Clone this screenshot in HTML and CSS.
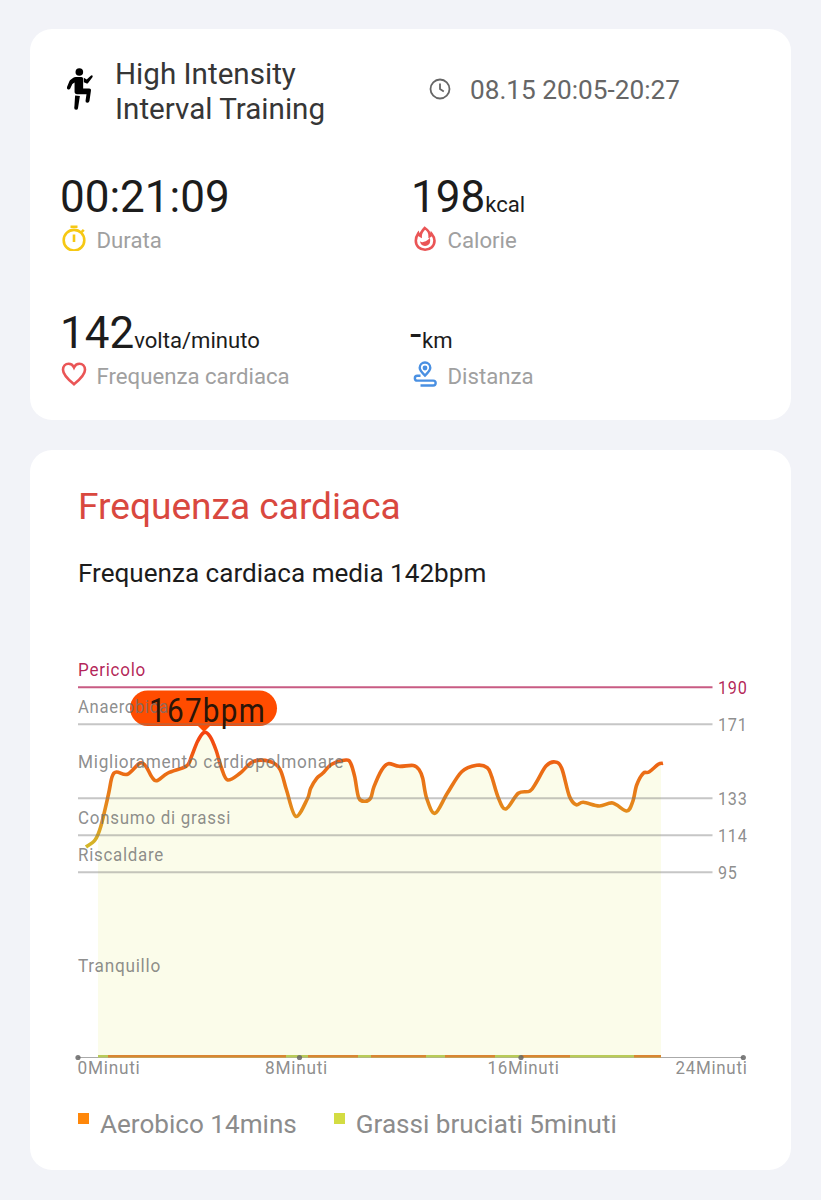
FILE: index.html
```html
<!DOCTYPE html>
<html lang="it">
<head>
  <meta charset="UTF-8" />
  <meta name="viewport" content="width=device-width, initial-scale=1" />
  <title>High Intensity Interval Training</title>
  <link rel="stylesheet" href="styles.css">
</head>
<body>
  <section class="card summary">
    <div class="header">
      <svg class="sport-icon" viewBox="0 0 28 44">
        <circle cx="13.3" cy="4.2" r="4" />
        <path d="M7 10.300Q8 9.400 9.500 9.400H15.500Q17.300 9.400 17.300 11.200V21.500H23.700Q25.900 21.500 25.500 23.700L23.900 34.700Q23.500 36.600 21.700 36.500Q19.500 36.300 19.800 34.200L20.800 27.600H11Q8.300 27.600 8.300 25V15.300L6 16.800L3.800 21.500Q3 23.100 1.400 22.400Q-.2 21.600.4 19.900L3 13.500Q3.300 12.900 3.800 12.500Z" />
        <path d="M18 10.300L21 12L25.300 8Q26.200 7.200 27 7.900Q27.700 8.600 27 9.600L22.500 15.600Q21.700 16.600 20.500 16L18 14.800Z" />
        <path d="M8.900 28.800L13.900 29.300L11.900 42.200Q11.600 43.900 9.800 43.800Q7.900 43.600 8 41.800Z" />
      </svg>
      <h1>High Intensity<br>Interval Training</h1>
      <div class="date">
        <svg class="clock" viewBox="0 0 22 22">
          <circle cx="11" cy="11" r="9.500" />
          <path d="M11 5.500V11l3.800 2.400" />
        </svg>
        <span>08.15 20:05-20:27</span>
      </div>
    </div>

    <div class="stats">
      <div class="stat">
        <div class="value">00:21:09</div>
        <div class="label">
          <svg class="icon yellow" viewBox="0 0 26 26">
            <circle cx="13" cy="15.200" r="10.300" />
            <path d="M9.500 1.700h7M13 9.500v7.500M20.500 7.200l2.300-2.300" />
          </svg>
          <span>Durata</span>
        </div>
      </div>
      <div class="stat">
        <div class="value">198<small>kcal</small></div>
        <div class="label">
          <svg class="icon red" viewBox="0 0 26 26">
            <path d="M12.800 3c3.600 2.200 5 4.900 4.900 8.200 1-.4 1.700-1.200 1.900-2.400 2 2.300 2.900 4.700 2.900 7 0 5.300-4 8.900-9.400 8.900s-9.300-3.600-9.300-8.900c0-3 1-5.300 2.500-7.500.5 1.500 1.200 2.300 2.300 2.800C8.500 8 10.300 5.500 12.800 3z" />
            <path class="fill" d="M17.800 12.700c1.300 4.800-.6 8.200-4.800 8.200-3.200 0-4.900-2-4.900-4.700 1.200 1 2.500 1.200 3.800.6 2.600-.7 4.400-2 5.900-4.100z" />
          </svg>
          <span>Calorie</span>
        </div>
      </div>
      <div class="stat">
        <div class="value">142<small>volta/minuto</small></div>
        <div class="label">
          <svg class="icon red" viewBox="0 0 26 26">
            <path d="M13 23.300C9 20 2 14.500 2 8.800 2 5.200 4.500 2.700 7.600 2.700c2.400 0 4.300 1.300 5.400 3.700 1.100-2.400 3-3.700 5.400-3.700C21.500 2.700 24 5.200 24 8.800c0 5.700-7 11.200-11 14.500z" />
          </svg>
          <span>Frequenza cardiaca</span>
        </div>
      </div>
      <div class="stat">
        <div class="value"><span class="dash">-</span><small>km</small></div>
        <div class="label">
          <svg class="icon blue" viewBox="0 0 26 26">
            <path d="M13 14.500c-3.200-3-5.300-4.900-5.300-7.700a5.300 5.300 0 0 1 10.600 0c0 2.800-2.100 4.700-5.300 7.700z" />
            <circle class="fill" cx="13" cy="7" r="2.400" />
            <path d="M8.500 14.700H5.300a2.400 2.400 0 0 0 0 4.900h15.900a2.400 2.400 0 0 1 0 4.900H8.500" />
          </svg>
          <span>Distanza</span>
        </div>
      </div>
    </div>
  </section>

  <section class="card heart">
    <h2>Frequenza cardiaca</h2>
    <p class="average">Frequenza cardiaca media 142bpm</p>

    <svg class="chart" viewBox="78 650 690 435">
      <defs>
        <linearGradient id="pulse" gradientUnits="userSpaceOnUse" x1="0" y1="732" x2="0" y2="848">
          <stop offset="0" stop-color="#f5400f" />
          <stop offset=".3" stop-color="#ec6714" />
          <stop offset=".75" stop-color="#e2921e" />
          <stop offset="1" stop-color="#d3b92a" />
        </linearGradient>
        <clipPath id="plot"><rect x="98" y="700" width="563" height="357" /></clipPath>
      </defs>

      <path id="area" clip-path="url(#plot)" />
      <path id="line" />
      <rect class="pill" x="130" y="690.500" width="147" height="35.500" rx="17.700" />
      <path class="pill" d="M197.500 725.500h13l-6.500 6.500z" />

      <g class="grid">
        <path class="danger" d="M78 687.200h634.500" />
        <path d="M78 724.200h634.500M78 798.300h634.500M78 835.300h634.500M78 872.300h634.500" />
      </g>

      <g class="zones">
        <text class="danger" x="78" y="675.500" textLength="68" lengthAdjust="spacingAndGlyphs">Pericolo</text>
        <text x="78" y="712.500" textLength="91" lengthAdjust="spacingAndGlyphs">Anaerobica</text>
        <text x="78" y="768" textLength="266" lengthAdjust="spacingAndGlyphs">Miglioramento cardiopolmonare</text>
        <text x="78" y="824" textLength="153" lengthAdjust="spacingAndGlyphs">Consumo di grassi</text>
        <text x="78" y="861" textLength="86" lengthAdjust="spacingAndGlyphs">Riscaldare</text>
        <text x="78" y="972" textLength="83" lengthAdjust="spacingAndGlyphs">Tranquillo</text>
      </g>
      <g class="scale">
        <text class="danger" x="718" y="693.500" textLength="29.500" lengthAdjust="spacingAndGlyphs">190</text>
        <text x="718" y="730.500" textLength="29.500" lengthAdjust="spacingAndGlyphs">171</text>
        <text x="718" y="804.800" textLength="29.500" lengthAdjust="spacingAndGlyphs">133</text>
        <text x="718" y="841.800" textLength="29.500" lengthAdjust="spacingAndGlyphs">114</text>
        <text x="718" y="878.800" textLength="19.500" lengthAdjust="spacingAndGlyphs">95</text>
      </g>
      <text class="peak" x="149" y="721.500" textLength="117" lengthAdjust="spacingAndGlyphs">167bpm</text>

      <path class="axis" d="M78 1057.500h665" />
      <path class="fat" d="M98 1056.300h563" />
      <path class="aerobic" d="M108 1056.300h178M308 1056.300h50M371 1056.300h55M445 1056.300h50M521 1056.300h49M634 1056.300h27" />
      <g class="ticks">
        <circle cx="78" cy="1057.500" r="2.600" />
        <circle cx="299.500" cy="1057.500" r="2.600" />
        <circle cx="521" cy="1057.500" r="2.600" />
        <circle cx="743.300" cy="1057.500" r="2.600" />
        <text x="77.500" y="1074" textLength="63" lengthAdjust="spacingAndGlyphs">0Minuti</text>
        <text x="265" y="1074" textLength="63" lengthAdjust="spacingAndGlyphs">8Minuti</text>
        <text x="487.500" y="1074" textLength="72" lengthAdjust="spacingAndGlyphs">16Minuti</text>
        <text x="675.500" y="1074" textLength="72" lengthAdjust="spacingAndGlyphs">24Minuti</text>
      </g>
    </svg>

    <div class="legend">
      <div class="legend-item"><i class="orange"></i>Aerobico 14mins</div>
      <div class="legend-item"><i class="lime"></i>Grassi bruciati 5minuti</div>
    </div>
  </section>

  <script>
    const points = [
      [86, 847], [95, 840], [100.7, 826.7], [108.3, 795], [112, 777], [116.5, 772], [127.5, 774.3],
      [140, 763], [146, 766.5], [151.5, 776.5], [156.7, 780.7], [168, 773], [186.5, 766], [191.5, 756.5],
      [197.5, 741.5], [204, 732.5], [210, 736.5], [216, 750], [221.5, 768], [227.7, 780], [240, 773.3],
      [253.3, 761.5], [270, 761.5], [280, 769.3], [286.5, 790], [295.7, 816.3], [307.3, 799],
      [310.7, 788.3], [316.7, 778.3], [322.7, 773.3], [331.7, 764.3], [346, 760], [350.7, 763.3],
      [354.7, 776.7], [358.7, 797.7], [365, 801.3], [370.7, 798], [374, 786.7], [381.7, 770],
      [388.3, 763.7], [399, 766.3], [413.3, 765.5], [419.3, 770], [422.7, 778.3], [426.7, 798.3],
      [435, 813.3], [447.3, 793.3], [461.7, 771.7], [476.7, 765.3], [487.3, 767.7], [491.7, 776.7],
      [498.3, 797.7], [505.8, 809], [518.3, 793.3], [530, 791], [536.7, 781.7], [546, 766],
      [555, 762], [561.7, 768.3], [569.3, 796], [576, 804.7], [583.3, 802.3], [599.3, 806],
      [612.7, 803], [626.7, 811], [632.7, 801.7], [636.7, 785], [643.3, 773.3], [649, 772],
      [658.3, 764.3], [663, 763.3]
    ];

    // smooth curve through all the samples
    function curve(p) {
      let d = `M${p[0][0]} ${p[0][1]}`;
      for (let i = 0; i < p.length - 1; i++) {
        const a = p[i - 1] || p[i], b = p[i], c = p[i + 1], e = p[i + 2] || c;
        d += `C${b[0] + (c[0] - a[0]) / 6} ${b[1] + (c[1] - a[1]) / 6} ${c[0] - (e[0] - b[0]) / 6} ${c[1] - (e[1] - b[1]) / 6} ${c[0]} ${c[1]}`;
      }
      return d;
    }

    const d = curve(points);
    document.getElementById("line").setAttribute("d", d);
    document.getElementById("area").setAttribute("d", d + "V1057H86Z");
  </script>
</body>
</html>
```
FILE: styles.css
```css
:root {
  --bg-color: #f2f3f8;
  --text-color: #1c1c1c;
  --muted-color: #a0a0a0;
  --red-color: #ea5556;
}
* {
  box-sizing: border-box;
}
body {
  margin: 0;
  padding: 29px 30px 30px;
  display: flex;
  flex-direction: column;
  gap: 30px;
  background-color: var(--bg-color);
  color: var(--text-color);
  font-family: Roboto, sans-serif;
}
.card {
  background-color: #fff;
  border-radius: 22px;
}
.summary {
  height: 390.5px;
  padding: 28px 30px 0;
}
.header {
  display: grid;
  grid-template-columns: 55px 314px 1fr;
  height: 70px;
}
.sport-icon {
  width: 28px;
  height: 42px;
  margin: 11px 0 0 6px;
}
h1 {
  margin: 0;
  font-size: 29.6px;
  line-height: 35px;
  font-weight: 400;
  color: #363636;
}
.date {
  display: flex;
  align-items: center;
  height: 66px;
  gap: 19px;
  font-size: 26.2px;
  color: #666;
}
.clock {
  width: 22px;
  height: 22px;
  margin-top: -3px;
  fill: none;
  stroke: #666;
  stroke-width: 1.8;
}
.stats {
  display: grid;
  grid-template-columns: 351px 1fr;
  grid-auto-rows: 136px;
  padding-top: 42px;
}
.value {
  height: 56px;
  font-size: 44px;
  line-height: 56px;
  white-space: nowrap;
}
.value small {
  font-size: 22.1px;
}
.dash {
  display: inline-block;
  width: 12px;
  margin-left: -1px;
  font-size: 41px;
  line-height: 50px;
}
.label {
  display: flex;
  align-items: center;
  gap: 9.5px;
  height: 30px;
  font-size: 22.2px;
  color: var(--muted-color);
}
.icon {
  width: 26px;
  height: 26px;
  margin: -4px 0 0 1px;
  fill: none;
  stroke-width: 2.6;
}
.yellow {
  stroke: #f6c813;
}
.red {
  stroke: var(--red-color);
}
.blue {
  stroke: #4a90e2;
  stroke-width: 2.4;
}
.icon .fill {
  stroke: none;
  fill: var(--red-color);
}
.blue .fill {
  fill: #4a90e2;
}

/* heart rate card */
.heart {
  height: 720.5px;
  padding: 35.5px 0 0 48px;
}
h2 {
  margin: 0;
  font-size: 37.1px;
  line-height: 44px;
  font-weight: 400;
  color: #d9483f;
}
.average {
  margin: 29px 0 0;
  font-size: 26.1px;
  line-height: 31px;
}
.chart {
  display: block;
  width: 690px;
  height: 435px;
  margin-top: 61px;
  overflow: visible;
}
.chart text {
  font-size: 18.8px;
  letter-spacing: 0.8px;
  fill: #707070;
  fill-opacity: 0.8;
}
#area {
  fill: #fbfcea;
}
#line {
  fill: none;
  stroke: url(#pulse);
  stroke-width: 3.6;
}
.pill {
  fill: #ff4c00;
}
.grid path {
  stroke: #777;
  stroke-opacity: 0.42;
  stroke-width: 2;
}
.grid .danger {
  stroke: #b0164f;
  stroke-opacity: 0.7;
}
.chart text.danger {
  fill: #b0164f;
  fill-opacity: 0.95;
}
.chart .scale text {
  font-size: 19px;
}
.chart .peak {
  font-size: 33px;
  letter-spacing: 1.4px;
  fill: #2b1509;
  fill-opacity: 1;
}
.axis {
  stroke: #aaa;
}
.fat {
  stroke: #b9cb58;
  stroke-width: 2.4;
}
.aerobic {
  stroke: #d98632;
  stroke-width: 2.4;
}
.ticks circle {
  fill: #666;
  fill-opacity: 0.85;
}
.legend {
  display: flex;
  gap: 37px;
  margin-top: 23px;
  font-size: 26.1px;
  line-height: 32px;
  color: #8c8c8c;
}
.legend-item {
  display: flex;
  gap: 11px;
}
.legend i {
  width: 11px;
  height: 11px;
  margin-top: 5px;
}
.orange {
  background-color: #ff870a;
}
.lime {
  background-color: #d3dc42;
}
```
